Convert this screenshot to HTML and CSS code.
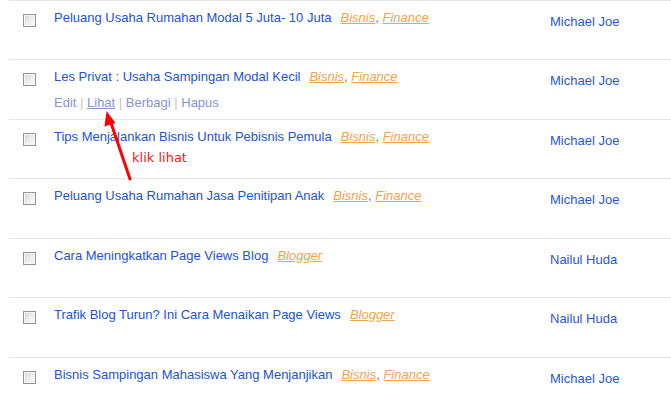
FILE: index.html
```html
<!DOCTYPE html>
<html lang="id">
<head>
<meta charset="utf-8">
<title>Daftar Entri</title>
<link rel="stylesheet" href="styles.css">
</head>
<body>
<div class="list">
  <div class="row">
    <div class="c-check"><span class="box"></span></div>
    <div class="c-title">
      <div class="line"><a class="title" href="#">Peluang Usaha Rumahan Modal 5 Juta- 10 Juta</a><span class="cats"><a href="#">Bisnis</a><span class="comma">, </span><a href="#">Finance</a></span></div>
    </div>
    <div class="c-author">Michael Joe</div>
  </div>
  <div class="row">
    <div class="c-check"><span class="box"></span></div>
    <div class="c-title">
      <div class="line"><a class="title" href="#">Les Privat : Usaha Sampingan Modal Kecil</a><span class="cats"><a href="#">Bisnis</a><span class="comma">, </span><a href="#">Finance</a></span></div>
      <div class="actions"><a href="#">Edit</a><span class="pipe"> | </span><a href="#" class="hover">Lihat</a><span class="pipe"> | </span><a href="#">Berbagi</a><span class="pipe"> | </span><a href="#">Hapus</a></div>
    </div>
    <div class="c-author">Michael Joe</div>
  </div>
  <div class="row">
    <div class="c-check"><span class="box"></span></div>
    <div class="c-title">
      <div class="line"><a class="title" href="#">Tips Menjalankan Bisnis Untuk Pebisnis Pemula</a><span class="cats"><a href="#">Bisnis</a><span class="comma">, </span><a href="#">Finance</a></span></div>
    </div>
    <div class="c-author">Michael Joe</div>
  </div>
  <div class="row">
    <div class="c-check"><span class="box"></span></div>
    <div class="c-title">
      <div class="line"><a class="title" href="#">Peluang Usaha Rumahan Jasa Penitipan Anak</a><span class="cats"><a href="#">Bisnis</a><span class="comma">, </span><a href="#">Finance</a></span></div>
    </div>
    <div class="c-author">Michael Joe</div>
  </div>
  <div class="row">
    <div class="c-check"><span class="box"></span></div>
    <div class="c-title">
      <div class="line"><a class="title" href="#">Cara Meningkatkan Page Views Blog</a><span class="cats"><a href="#">Blogger</a></span></div>
    </div>
    <div class="c-author">Nailul Huda</div>
  </div>
  <div class="row">
    <div class="c-check"><span class="box"></span></div>
    <div class="c-title">
      <div class="line"><a class="title" href="#">Trafik Blog Turun? Ini Cara Menaikan Page Views</a><span class="cats"><a href="#">Blogger</a></span></div>
    </div>
    <div class="c-author">Nailul Huda</div>
  </div>
  <div class="row">
    <div class="c-check"><span class="box"></span></div>
    <div class="c-title">
      <div class="line"><a class="title" href="#">Bisnis Sampingan Mahasiswa Yang Menjanjikan</a><span class="cats"><a href="#">Bisnis</a><span class="comma">, </span><a href="#">Finance</a></span></div>
    </div>
    <div class="c-author">Michael Joe</div>
  </div>
</div>

<svg class="arrow" width="671" height="414" viewBox="0 0 671 414" aria-hidden="true">
  <line x1="130" y1="179" x2="110" y2="120" stroke="#ff0000" stroke-width="3" stroke-linecap="round"/>
  <polygon points="106.5,111 115.5,123 104.5,126.5" fill="#ff0000"/>
</svg>
<div class="note">klik lihat</div>
</body>
</html>
```
FILE: styles.css
```css
html, body {
  margin: 0;
  padding: 0;
  background: #ffffff;
}

body {
  font-family: "Liberation Sans", Arial, sans-serif;
  font-size: 13px;
  line-height: 18px;
  overflow: hidden;
  position: relative;
  width: 671px;
  height: 414px;
}

.list {
  margin-top: -0.5px;
  margin-left: 9px;
}

.row {
  box-sizing: border-box;
  height: 59.5px;
  border-top: 1px solid #e6e6e6;
  display: grid;
  grid-template-columns: 45px 496px 1fr;
  align-items: start;
}

.c-check {
  padding-left: 14px;
  padding-top: 13px;
}

.box {
  display: block;
  box-sizing: border-box;
  width: 13px;
  height: 13px;
  border: 1px solid #939393;
  background: linear-gradient(135deg, #d6d6d6 0%, #eeeeee 55%, #fcfcfc 100%);
  box-shadow: inset 0 0 0 1px #f6f6f6;
}

.c-title {
  padding-top: 8px;
}

.line {
  white-space: nowrap;
}

a {
  text-decoration: none;
}

.title {
  color: #2153d6;
}

.cats {
  margin-left: 9px;
  font-style: italic;
}

.cats a {
  color: #f5a24c;
  text-decoration: underline;
}

.comma {
  color: #7a7a7a;
  font-style: normal;
}

.actions {
  margin-top: 8px;
  white-space: nowrap;
}

.actions a {
  color: #8494d0;
}

.actions a.hover {
  text-decoration: underline;
}

.pipe {
  color: #c4c4c4;
}

.c-author {
  padding-top: 12px;
  color: #2757d4;
  white-space: nowrap;
}

.arrow {
  position: absolute;
  left: 0;
  top: 0;
  pointer-events: none;
}

.note {
  position: absolute;
  left: 132px;
  top: 150px;
  font-family: "DejaVu Sans", Verdana, sans-serif;
  font-size: 13px;
  line-height: 16px;
  color: #f01818;
}
```
